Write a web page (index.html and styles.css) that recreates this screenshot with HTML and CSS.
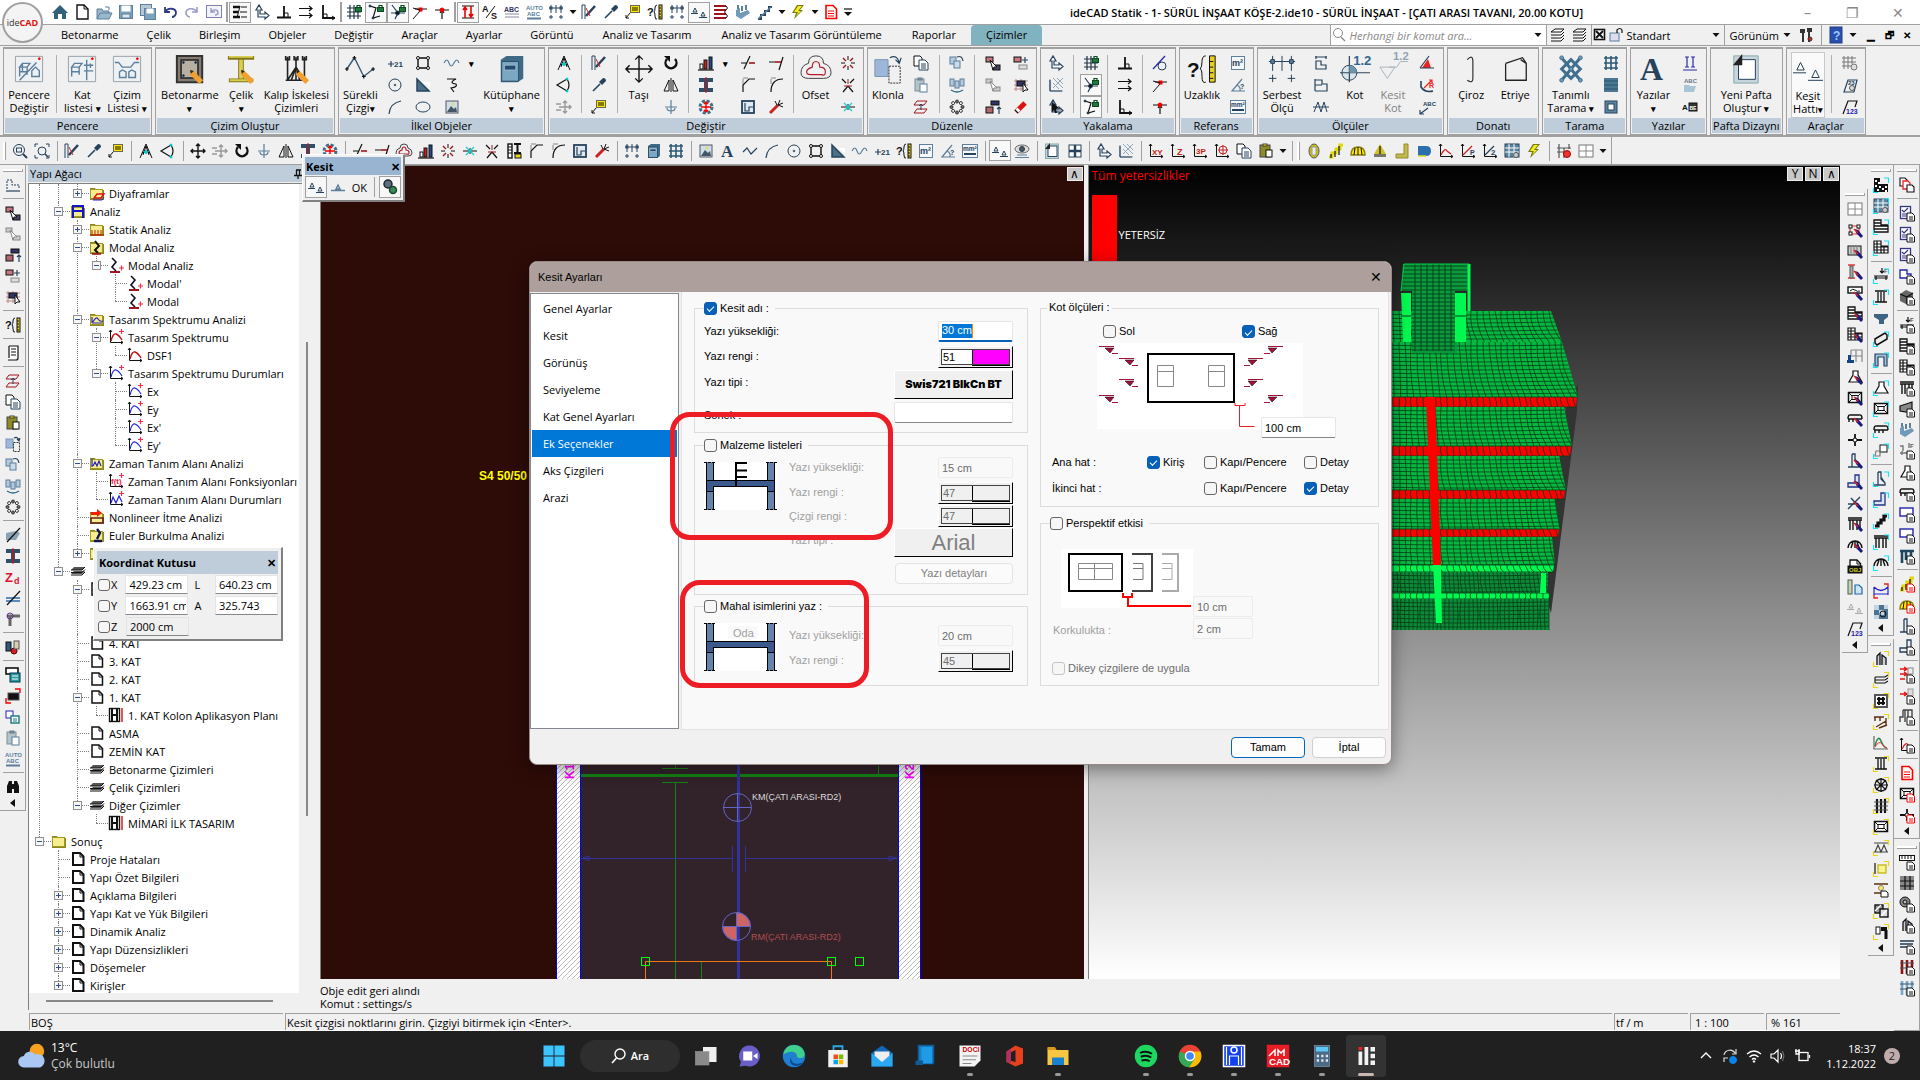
FILE: index.html
```html
<!DOCTYPE html>
<html lang="tr">
<head>
  <meta charset="UTF-8" />
  <meta name="viewport" content="width=device-width, initial-scale=1" />
  <title>ideCAD Statik</title>
  <link rel="stylesheet" href="styles.css">
</head>
<body>

<header class="titlebar">
  <div class="quick" data-icons="home new open save saveall undo redo redobox | layers* coord perp parallel corner | gridlock polylock* crosslock* redseg redmid | updown* as abc autoabc dim v pen pipette note measure dim section* rebar beam stairs v bolt v reddoc more"></div>
  <h1>ideCAD Statik - 1- SÜRÜL İNŞAAT KÖŞE-2.ide10 - SÜRÜL İNŞAAT - [ÇATI ARASI TAVANI, 20.00 KOTU]</h1>
  <div class="winbtns"><button>&#x2013;</button><button>&#x2750;</button><button>&#x2715;</button></div>
</header>

<nav class="menubar">
  <a href="#">Betonarme</a><a href="#">Çelik</a><a href="#">Birleşim</a><a href="#">Objeler</a><a href="#">Değiştir</a><a href="#">Araçlar</a><a href="#">Ayarlar</a><a href="#">Görüntü</a><a href="#">Analiz ve Tasarım</a><a href="#">Analiz ve Tasarım Görüntüleme</a><a href="#">Raporlar</a><a href="#" class="active">Çizimler</a>
  <div class="menu-right">
    <label class="search"><i data-i="lens"></i><input type="text" placeholder="Herhangi bir komut ara..." aria-label="Komut ara"><i data-i="v"></i></label>
    <div class="menu-icons" data-icons="stack stack"></div>
    <button class="layer"><i data-i="xbox"></i><i data-i="lock"></i><span>Standart</span><i data-i="v"></i></button>
    <button class="plain">Görünüm <i data-i="v"></i></button>
    <div class="menu-icons" data-icons="tools | help v"></div>
    <div class="mdi"><button>&#x2581;</button><button>&#x1F5D7;</button><button>&#x2715;</button></div>
  </div>
</nav>
<div class="logo"><span>ide<b>CAD</b></span></div>

<section class="ribbon">
  <div class="rgroup"><div class="rbody">
    <button class="big"><i data-i="winswap"></i><span>Pencere<br>Değiştir</span></button>
    <span class="rsep"></span>
    <button class="big"><i data-i="winlist"></i><span>Kat<br>listesi <b>▾</b></span></button>
    <button class="big"><i data-i="windraw"></i><span>Çizim<br>Listesi <b>▾</b></span></button>
  </div><h2>Pencere</h2></div>
  <div class="rgroup"><div class="rbody">
    <button class="big"><i data-i="column"></i><span>Betonarme<br><b>▾</b></span></button>
    <button class="big"><i data-i="steel"></i><span>Çelik<br><b>▾</b></span></button>
    <button class="big"><i data-i="scaffold"></i><span>Kalıp İskelesi<br>Çizimleri</span></button>
  </div><h2>Çizim Oluştur</h2></div>
  <div class="rgroup"><div class="rbody">
    <button class="big"><i data-i="polybig"></i><span>Sürekli<br>Çizgi<b>▾</b></span></button>
    <div class="rcol" data-icons="plus21 circle arc"></div>
    <div class="rcol" data-icons="rectd tri ellipse"></div>
    <div class="rcol" data-icons="wave spline image"></div>
    <div class="rcol arrows"><b>▾</b></div>
    <button class="big"><i data-i="book"></i><span>Kütüphane<br><b>▾</b></span></button>
  </div><h2>İlkel Objeler</h2></div>
  <div class="rgroup"><div class="rbody">
    <div class="rcol" data-icons="compass cone movegray"></div><span class="rsep"></span>
    <div class="rcol" data-icons="pen pipette note"></div><span class="rsep"></span>
    <button class="big"><i data-i="move"></i><span>Taşı</span></button>
    <div class="rcol" data-icons="rotate flip mirror"></div><span class="rsep"></span>
    <div class="rcol" data-icons="chart ibeam burst"></div>
    <div class="rcol arrows"><b>▾</b></div>
    <div class="rcol" data-icons="trim chamfer frame"></div>
    <div class="rcol" data-icons="extend fillet wand"></div><span class="rsep"></span>
    <button class="big"><i data-i="offset"></i><span>Ofset</span></button>
    <div class="rcol" data-icons="sparks redx crosscyan"></div>
  </div><h2>Değiştir</h2></div>
  <div class="rgroup"><div class="rbody">
    <button class="big"><i data-i="clone"></i><span>Klonla</span></button>
    <div class="rcol" data-icons="copy paste zlevel"></div><span class="rsep"></span>
    <div class="rcol" data-icons="clonemulti clonerow ring"></div><span class="rsep"></span>
    <div class="rcol" data-icons="sel1 sel2 sel3"></div>
    <div class="rcol" data-icons="sel4 sel5 eraser"></div>
  </div><h2>Düzenle</h2></div>
  <div class="rgroup"><div class="rbody">
    <div class="rcol" data-icons="coord hatchcoord coordsel"></div><span class="rsep"></span>
    <div class="rcol" data-icons="gridlock crosslock* polylock*"></div><span class="rsep"></span>
    <div class="rcol" data-icons="perp parallel corner"></div><span class="rsep"></span>
    <div class="rcol" data-icons="tangent redseg redmid"></div>
  </div><h2>Yakalama</h2></div>
  <div class="rgroup"><div class="rbody">
    <button class="big"><i data-i="measure"></i><span>Uzaklık</span></button>
    <div class="rcol" data-icons="m2 angle mm2"></div>
  </div><h2>Referans</h2></div>
  <div class="rgroup"><div class="rbody">
    <button class="big"><i data-i="dim"></i><span>Serbest<br>Ölçü</span></button>
    <div class="rcol" data-icons="dim1 dim2 dim3"></div>
    <button class="big"><i data-i="level"></i><span>Kot</span></button>
    <button class="big faded"><i data-i="levelcut"></i><span>Kesit<br>Kot</span></button>
    <div class="rcol" data-icons="redangle redradius abcarrow"></div>
  </div><h2>Ölçüler</h2></div>
  <div class="rgroup"><div class="rbody">
    <button class="big"><i data-i="hook"></i><span>Çiroz</span></button>
    <button class="big"><i data-i="stirrup"></i><span>Etriye</span></button>
  </div><h2>Donatı</h2></div>
  <div class="rgroup"><div class="rbody">
    <button class="big"><i data-i="lattice"></i><span>Tanımlı<br>Tarama <b>▾</b></span></button>
    <div class="rcol" data-icons="grid solid hole"></div>
  </div><h2>Tarama</h2></div>
  <div class="rgroup"><div class="rbody">
    <button class="big"><i data-i="letter"></i><span>Yazılar<br><b>▾</b></span></button>
    <div class="rcol" data-icons="textii abcopen abe"></div>
  </div><h2>Yazılar</h2></div>
  <div class="rgroup"><div class="rbody">
    <button class="big"><i data-i="sheet"></i><span>Yeni Pafta<br>Oluştur <b>▾</b></span></button>
  </div><h2>Pafta Dizaynı</h2></div>
  <div class="rgroup"><div class="rbody">
    <button class="big on"><i data-i="section"></i><span>Ke<u>s</u>it<br>Hattı<b>▾</b></span></button><span class="rsep"></span>
    <div class="rcol" data-icons="gridgear slope23 slope123"></div>
  </div><h2>Araçlar</h2></div>
</section>

<div class="toolbar" data-icons="h zoom zoomall | pen pipette note | compass cone | move movegray rotate mirror flip ibeam burst | trim extend offset chart sparks crosscyan redx sectioni chamfer fillet frame wand | dim book grid | image letter poly arc circle rectd tri wave plus21 measure m2 angle mm2 | section* eye | sheet four | coord hatchcoord | xy lz p3 lc copy pastey v | h ylw stairsy dome ycone yl dee curve curvep curve2 calcgrid bolt | gridred gridx v"></div>

<main class="shell">
  <div class="left">
    <div class="work">
      <div class="strip first" data-icons="= lshape | sel1 sel2 sel3 sel4 sel5 | measure | docs | zlevel copy pastey clone clonemulti clonerow ring | slab ibeam zd slope frameh | balls | calcs screen docblue paste autoabc | binoc <"></div>

      <aside class="tree-panel">
        <h2>Yapı Ağacı <i data-i="pin"></i></h2>
        <div class="tree-box">
          <ul class="tree">
            <li><ul>
              <li><ul>
                <li><p><em class="plus"></em><i data-i="fdiy"></i>Diyaframlar</p></li>
              </ul></li>
              <li><p><em></em><i data-i="fan"></i>Analiz</p><ul>
                <li><p><em class="plus"></em><i data-i="fst"></i>Statik Analiz</p></li>
                <li><p><em></em><i data-i="fmod"></i>Modal Analiz</p><ul>
                  <li><p><em></em><i data-i="modal"></i>Modal Analiz</p><ul>
                    <li><p><i data-i="modal"></i>Modal'</p></li>
                    <li><p><i data-i="modal"></i>Modal</p></li>
                  </ul></li>
                </ul></li>
                <li><p><em></em><i data-i="fspec"></i>Tasarım Spektrumu Analizi</p><ul>
                  <li><p><em></em><i data-i="specr+plus"></i>Tasarım Spektrumu</p><ul>
                    <li><p><i data-i="specr"></i>DSF1</p></li>
                  </ul></li>
                  <li><p><em></em><i data-i="specb+plus"></i>Tasarım Spektrumu Durumları</p><ul>
                    <li><p><i data-i="specb+plus"></i>Ex</p></li>
                    <li><p><i data-i="specb+plus"></i>Ey</p></li>
                    <li><p><i data-i="specb+plus"></i>Ex'</p></li>
                    <li><p><i data-i="specb+plus"></i>Ey'</p></li>
                  </ul></li>
                </ul></li>
                <li><p><em></em><i data-i="ftime"></i>Zaman Tanım Alanı Analizi</p><ul>
                  <li><p><i data-i="ft+plus"></i>Zaman Tanım Alanı Fonksiyonları</p></li>
                  <li><p><i data-i="timeb+plus"></i>Zaman Tanım Alanı Durumları</p></li>
                </ul></li>
                <li><p><i data-i="fnon"></i>Nonlineer İtme Analizi</p></li>
                <li><p><i data-i="feul"></i>Euler Burkulma Analizi</p></li>
                <li><p><em class="plus"></em><i data-i="folder"></i></p></li>
              </ul></li>
              <li><p><em></em><i data-i="stackb"></i></p><ul>
                <li><p><em></em><i data-i="page"></i></p><ul>
                  <li><p></p></li>
                  <li><p></p></li>
                </ul></li>
                <li><p><i data-i="page"></i>4. KAT</p></li>
                <li><p><i data-i="page"></i>3. KAT</p></li>
                <li><p><i data-i="page"></i>2. KAT</p></li>
                <li><p><em></em><i data-i="page"></i>1. KAT</p><ul>
                  <li><p><i data-i="plan"></i>1. KAT Kolon Aplikasyon Planı</p></li>
                </ul></li>
                <li><p><i data-i="page"></i>ASMA</p></li>
                <li><p><i data-i="page"></i>ZEMİN KAT</p></li>
                <li><p><i data-i="stackb"></i>Betonarme Çizimleri</p></li>
                <li><p><i data-i="stackb"></i>Çelik Çizimleri</p></li>
                <li><p><em></em><i data-i="stackb"></i>Diğer Çizimler</p><ul>
                  <li><p><i data-i="plan"></i>MİMARİ İLK TASARIM</p></li>
                </ul></li>
              </ul></li>
            </ul></li>
            <li><p><em></em><i data-i="folder"></i>Sonuç</p><ul>
              <li><p><i data-i="pageb"></i>Proje Hataları</p></li>
              <li><p><i data-i="pageb"></i>Yapı Özet Bilgileri</p></li>
              <li><p><em class="plus"></em><i data-i="pageb"></i>Açıklama Bilgileri</p></li>
              <li><p><em class="plus"></em><i data-i="pageb"></i>Yapı Kat ve Yük Bilgileri</p></li>
              <li><p><em class="plus"></em><i data-i="pageb"></i>Dinamik Analiz</p></li>
              <li><p><em class="plus"></em><i data-i="pageb"></i>Yapı Düzensizlikleri</p></li>
              <li><p><em class="plus"></em><i data-i="pageb"></i>Döşemeler</p></li>
              <li><p><em class="plus"></em><i data-i="pageb"></i>Kirişler</p></li>
            </ul></li>
          </ul>
          <div class="vbar"></div>
          <div class="hbar"></div>
        </div>
      </aside>

      <div class="center">
        <div class="views">
          <div class="view plan">
            <svg class="drawing" width="763" height="813" viewBox="321 165 763 813">
              <defs>
                <pattern id="dots" width="5" height="5" patternUnits="userSpaceOnUse"><rect width="5" height="5" fill="#fff"/><path d="M0 5L5 0" stroke="#bbb"/></pattern>
              </defs>
              <text x="479" y="479" fill="#ff0" font-size="12" font-weight="bold">S4 50/50</text>
              <rect x="581" y="600" width="317" height="378" fill="#32222a"/>
              <g fill="url(#dots)" stroke="#00f" stroke-width="1">
                <rect x="556.5" y="600" width="24" height="390"/><rect x="898.5" y="600" width="22" height="390"/>
              </g>
              <g fill="none" stroke="#148214">
                <path d="M581 774.500H898" stroke-width="3"/>
                <path d="M662 767.500H688M662 781.500H688M675.500 700V767M675.500 781V978M701.500 961V978M878.500 765V774"/>
              </g>
              <path d="M738.500 700V978" stroke="#32329a" stroke-width="3"/>
              <path d="M581 857.500H732M746 857.500H898M732.500 845V871M745.500 845V871M583 857l6-2v5zM896 857l-7-2v5z" stroke="#32329a" fill="none"/>
              <g fill="none" stroke="#6464c8">
                <circle cx="737.500" cy="806.500" r="14"/><path d="M723 806.500h28M737.500 792v28"/>
                <path d="M736.500 925.500v-14a14 14 0 0 1 14 14zM736.500 925.500v14a14 14 0 0 1-14-14z" fill="#cf6464"/>
                <circle cx="736.500" cy="925.500" r="14"/>
              </g>
              <path d="M645.500 978V960.500H831.500V978" fill="none" stroke="#f07810"/>
              <g fill="none" stroke="#0f0"><rect x="641.500" y="956.500" width="8" height="8"/><rect x="827.500" y="956.500" width="8" height="8"/><rect x="855.500" y="956.500" width="8" height="8"/></g>
              <text x="752" y="799" fill="#ddd" font-size="9">KM(ÇATI ARASI-RD2)</text>
              <text x="751" y="939" fill="#b05050" font-size="9">RM(ÇATI ARASI-RD2)</text>
              <g fill="#f0f" font-size="12" font-weight="bold"><text transform="translate(574 778) rotate(-90)">K1</text><text transform="translate(914 778) rotate(-90)">K2</text></g>
            </svg>
            <div class="vbtns"><button>&#x2227;</button></div>
          </div>
          <div class="view model">
            <p class="warn">Tüm yetersizlikler</p>
            <p class="legend"><span></span>YETERSİZ</p>
            <svg class="drawing" width="752" height="813" viewBox="1088 165 752 813" id="model"></svg>
            <div class="vbtns"><button>Y</button><button>N</button><button>&#x2227;</button></div>
          </div>
        </div>
        <div class="command">Obje edit geri alındı<br>Komut : settings/s</div>
      </div>
    </div>
    <footer class="status"><span>BOŞ</span><span>Kesit çizgisi noktlarını girin. Çizgiyi bitirmek için &lt;Enter&gt;.</span><span>tf / m</span><span>1 : 100</span><span>% 161</span></footer>
  </div>
  <div class="strips">
    <div class="scol low"><div class="strip" data-icons="= gridx nodes+brush slabg+brush colred+brush beamw+brush lshp+brush lgrid+brush foot bell+brush foundation+brush cap+brush star tower+brush boot+brush cross+brush piles+brush dome2+brush obj strips sectiong slope123 <"></div></div>
    <div class="scol">
      <div class="strip" data-icons="= checker+cyan calcgrid+cyan lshp+cyan lgrid+cyan | load+cyan ibig+cyan funnel slab2+cyan portal+cyan | bell+cyan foundation+cyan cap+cyan boxes+cyan | tower+cyan boot+cyan stairk+cyan piles+cyan dome2+cyan | bluecurve hatchz <"></div>
      <div class="strip" data-icons="= towers+yel layersw+yel mesh+yel truss+yel peak ibig+yel star8+yel bars+yel foundation+yel zig+yel boxy+yel noded hatchb+yel hammer+yel <"></div>
    </div>
    <div class="scol">
      <div class="strip" data-icons="= docsred | check+doc check+doc check+doc lshape2+doc block+doc | load+doc lshp+doc lgrid+doc piles+doc cone3+doc beam load2+doc bell+doc cap+doc monitor+doc monitor+doc pilesb+doc | stairsy+rdoc dome+rdoc towerb+doc bootb+doc | redarr+doc redarr2+doc rib+doc | curve+doc | reddoc foundation+rdoc star+rdoc <"></div>
      <div class="strip grow" data-icons="= ruler+doc mesh2 gear+doc towers+doc slab3+doc barsred+doc barsblue+doc"><button></button></div>
    </div>
  </div>
</main>

<footer class="taskbar">
  <div class="weather"><i data-i="weather"></i><p>13°C<br><span>Çok bulutlu</span></p></div>
  <div class="apps">
    <button><i data-i="win"></i></button>
    <button class="ara"><i data-i="lensw"></i>Ara</button>
    <button><i data-i="taskview"></i></button>
    <button><i data-i="chat"></i></button>
    <button><i data-i="edge"></i></button>
    <button><i data-i="store"></i></button>
    <button><i data-i="mail"></i></button>
    <button><i data-i="phone"></i></button>
    <button class="run"><i data-i="docapp"></i></button>
    <button><i data-i="office"></i></button>
    <button class="run"><i data-i="files"></i></button>
    <span class="slot"></span>
    <button class="run"><i data-i="spotify"></i></button>
    <button class="run"><i data-i="chrome"></i></button>
    <button class="run"><i data-i="bluei"></i></button>
    <button class="run"><i data-i="redcad"></i></button>
    <button class="run"><i data-i="calc"></i></button>
    <button class="run current"><i data-i="ideapp"></i></button>
  </div>
  <div class="tray"><i data-i="chev"></i><i data-i="sync"></i><i data-i="wifi"></i><i data-i="vol"></i><i data-i="bat"></i><p>18:37<br>1.12.2022</p><b>2</b></div>
</footer>

<!-- Kesit araç kutusu -->
<div class="float kesit">
  <h3>Kesit <button>&#x2715;</button></h3>
  <div><button class="on"><i data-i="section"></i></button><button><i data-i="section1"></i></button><button>OK</button><span></span><button class="on"><i data-i="gears"></i></button></div>
</div>

<!-- Koordinat kutusu -->
<div class="float koord">
  <h3>Koordinat Kutusu <button>&#x2715;</button></h3>
  <div class="krow"><label><input type="checkbox">X</label><input type="text" value="429.23 cm" aria-label="X"><span>L</span><input type="text" value="640.23 cm" aria-label="L"></div>
  <div class="krow"><label><input type="checkbox">Y</label><input type="text" value="1663.91 cm" aria-label="Y"><span>A</span><input type="text" value="325.743" aria-label="A"></div>
  <div class="krow"><label><input type="checkbox">Z</label><input type="text" value="2000 cm" aria-label="Z" class="grey"></div>
</div>

<!-- Kesit Ayarları penceresi -->
<div class="dialog" role="dialog" aria-label="Kesit Ayarları">
  <div class="dtitle">Kesit Ayarları <button>&#x2715;</button></div>
  <div class="dmain">
    <nav class="dlist"><a href="#">Genel Ayarlar</a><a href="#">Kesit</a><a href="#">Görünüş</a><a href="#">Seviyeleme</a><a href="#">Kat Genel Ayarları</a><a href="#" class="active">Ek Seçenekler</a><a href="#">Aks Çizgileri</a><a href="#">Arazi</a></nav>
    <div class="dpage">
      <div class="dcol">
        <fieldset class="g1">
          <legend><label><input type="checkbox" checked>Kesit adı :</label></legend>
          <div class="frow"><label for="h1">Yazı yüksekliği:</label><span class="focus"><mark>30 cm</mark><input type="text" id="h1" value=""></span></div>
          <div class="frow"><span>Yazı rengi :</span><button class="color">51<span class="magenta"></span></button></div>
          <div class="frow tall"><span>Yazı tipi :</span><button class="font swiss">Swis721 BlkCn BT</button></div>
          <div class="frow suffix"><label for="sonek">Sonek :</label><input type="text" id="sonek" class="wide"></div>
        </fieldset>
        <fieldset class="g2">
          <legend><label><input type="checkbox">Malzeme listeleri</label></legend>
          <div class="withpic">
            <svg width="74" height="50" viewBox="0 0 74 50"><rect width="74" height="48" fill="#fff"/><g id="hframe"><path d="M2 0h8v48H2zM63 0h8v48h-8z" fill="#6484ac"/><path d="M2 18h69v11h-8v-5H10v5H2z" fill="#3a5a8e"/><path d="M2.500 0v48M9.500 0v18M9.500 24v24M63.500 0v18M63.500 24v24M70.500 0v48M2 18.500h69M9 24.500h54M2 29.500h8M63 29.500h8" stroke="#000" fill="none"/><path d="M0 .5h12M62 .5h12M0 47.500h12M62 47.500h12" stroke="#000" stroke-dasharray="3 1"/></g><path d="M32 24V1h11M32 8.500h11M32 15h11" stroke="#000" stroke-width="2" fill="none"/></svg>
            <div class="rows">
              <div class="frow"><label for="h2">Yazı yüksekliği:</label><input type="text" id="h2" value="15 cm" disabled></div>
              <div class="frow"><span>Yazı rengi :</span><button class="color" disabled>47<span></span></button></div>
              <div class="frow short"><span>Çizgi rengi :</span><button class="color" disabled>47<span></span></button></div>
              <div class="frow tall"><span>Yazı tipi :</span><button class="font arial" disabled>Arial</button></div>
              <div class="frow tall end"><button class="soft" disabled>Yazı detayları</button></div>
            </div>
          </div>
        </fieldset>
        <fieldset class="g3">
          <legend><label><input type="checkbox">Mahal isimlerini yaz :</label></legend>
          <div class="withpic">
            <svg width="74" height="50" viewBox="0 0 74 50"><rect width="74" height="48" fill="#fff"/><use href="#hframe"/><rect x="24" y="3" width="30" height="13" fill="#f9f9f9"/><text x="29" y="14" font-size="11" fill="#a0a0a0">Oda</text></svg>
            <div class="rows">
              <div class="frow"><label for="h3">Yazı yüksekliği:</label><input type="text" id="h3" value="20 cm" disabled></div>
              <div class="frow"><span>Yazı rengi :</span><button class="color" disabled>45<span></span></button></div>
            </div>
          </div>
        </fieldset>
      </div>
      <div class="dcol">
        <fieldset class="g4">
          <legend>Kot ölçüleri :</legend>
          <div class="sides"><label><input type="checkbox">Sol</label><label><input type="checkbox" checked>Sağ</label></div>
          <div class="kotpic">
            <svg width="206" height="87" viewBox="0 0 206 87"><rect width="206" height="86" fill="#fff"/><rect x="51" y="11" width="86" height="48" fill="none" stroke="#000" stroke-width="2"/><path d="M60.500 22.500h16v21h-16zM60.500 28.500h16M111.500 22.500h16v21h-16zM111.500 28.500h16" fill="none" stroke="#888"/><g id="kots"><path d="M2 3.500h15M15 10.500h6M22 15.500h15M35 22.500h6M22 36.500h15M35 43.500h6M2 52.500h15M15 59.500h6" stroke="#a0143c"/><path d="M8 5h9l-4 5zM28 17h9l-4 5zM28 38h9l-4 5zM8 54h9l-4 5z" fill="#a0143c" stroke="#000" stroke-width=".5"/></g><use href="#kots" transform="translate(188 0) scale(-1 1)"/><path d="M138 60v2.500h10V60M142.500 62v21.500h15" fill="none" stroke="#ee1c24"/></svg>
            <input type="text" value="100 cm" aria-label="Mesafe">
          </div>
          <div class="hat"><span>Ana hat :</span><label><input type="checkbox" checked>Kiriş</label><label><input type="checkbox">Kapı/Pencere</label><label><input type="checkbox">Detay</label></div>
          <div class="hat"><span>İkinci hat :</span><span></span><label><input type="checkbox">Kapı/Pencere</label><label><input type="checkbox" checked>Detay</label></div>
        </fieldset>
        <fieldset class="g5">
          <legend><label><input type="checkbox">Perspektif etkisi</label></legend>
          <div class="persp">
            <svg width="132" height="59" viewBox="0 0 132 59"><rect width="132" height="59" fill="#fff"/><rect x="8" y="5" width="53" height="37" fill="none" stroke="#000" stroke-width="2"/><path d="M17.500 14.500h34v16h-34zM17.500 19.500h34M33.500 14v16" fill="none" stroke="#888"/><path d="M71 5h20v37H71" fill="none" stroke="#404040" stroke-width="2"/><path d="M72 14.500h10v16H72M72 19.500h10" fill="none" stroke="#777"/><path d="M101 5h16v37h-16" fill="none" stroke="#aaa" stroke-width="2"/><path d="M101 14.500h10v16h-10M101 19.500h10" fill="none" stroke="#aaa"/><path d="M62 44v4h9v-4M67 48v9h63" fill="none" stroke="#f00" stroke-width="2"/></svg>
            <div><input type="text" value="10 cm" aria-label="Perspektif" disabled><input type="text" id="kork" value="2 cm" disabled></div>
            <label for="kork">Korkulukta :</label>
          </div>
          <label class="off"><input type="checkbox" disabled>Dikey çizgilere de uygula</label>
        </fieldset>
      </div>
    </div>
  </div>
  <div class="dfoot"><button class="primary">Tamam</button><button>İptal</button></div>
</div>
<div class="redbox one"></div>
<div class="redbox two"></div>

<script src="script.js"></script>
</body>
</html>
```
FILE: styles.css
```css
* { box-sizing: border-box; }
body {
  margin: 0;
  height: 100vh;
  display: flex;
  flex-direction: column;
  overflow: hidden;
  background: #f0f0f0;
  color: #000;
  font-family: 'Open Sans', 'Liberation Sans', sans-serif;
  font-size: 11px;
  line-height: 13px;
}
button, input { font: inherit; color: inherit; }
button { border: 0; padding: 0; background: none; }
a { color: inherit; text-decoration: none; }
p, h1, h2, h3, ul { margin: 0; padding: 0; font-size: 11px; font-weight: normal; }
i { display: inline-flex; font-style: normal; }
svg { display: block; }
i svg, .tb svg { width: 16px; height: 16px; overflow: visible; flex: none; }

/* üst çubuk */
.titlebar {
  height: 25px;
  display: flex;
  align-items: center;
  background: #fff;
  border-bottom: 1px solid #a0a0a0;
  padding-left: 49px;
}
.titlebar h1 {
  flex: 1;
  text-align: center;
  font-size: 11px;
  font-weight: 600;
  padding-left: 15px;
  white-space: nowrap;
}
.quick, .toolbar, .menu-icons { display: flex; align-items: center; }
.tb {
  width: 22px;
  height: 21px;
  flex: none;
  display: flex;
  align-items: center;
  justify-content: center;
}
.tb.on { background: #f8f8f8; border: 1px solid #a0a0a0; }
.tb.slim { width: 11px; }
.sep { width: 1px; height: 20px; margin: 0 3px 0 4px; background: #a0a0a0; flex: none; }
.quick .sep { width: 2px; margin: 0 1px; }
.handle { width: 3px; height: 18px; margin: 0 3px 0 1px; border-right: 1px solid #a0a0a0; background: #fff; flex: none; }
.winbtns { display: flex; }
.winbtns button { width: 45px; color: #888; font-size: 14px; }
.logo {
  position: absolute;
  left: 2px;
  top: 2px;
  width: 41px;
  height: 41px;
  border: 2px solid #a0a0a0;
  border-radius: 50%;
  background: #f4f4f4;
  display: flex;
  align-items: center;
  justify-content: center;
  font-size: 9px;
  color: #333;
}
.logo b { color: #e01010; }

.menubar {
  height: 21px;
  display: flex;
  align-items: center;
  padding-left: 47px;
  border-bottom: 1px solid #a0a0a0;
}
.menubar a { padding: 3px 14px 4px; white-space: nowrap; }
.menubar a:nth-child(n+9) { padding: 3px 15px 4px; }
.menubar a.active { background: #80b2c0; border-radius: 4px 4px 0 0; }
.menu-right { margin-left: auto; display: flex; align-items: center; height: 20px; }
.search {
  width: 217px;
  height: 20px;
  display: flex;
  align-items: center;
  background: #fff;
  border: 1px solid #a0a0a0;
  border-width: 0 1px;
}
.search input { flex: 1; width: 100px; border: 0; background: none; font-style: italic; outline: none; }
.search input::placeholder { color: #888; }
.layer {
  width: 134px;
  height: 20px;
  display: flex;
  align-items: center;
  border: 1px solid #a0a0a0;
  border-width: 0 1px;
}
.layer span { flex: 1; text-align: left; padding-left: 2px; }
.plain { display: flex; align-items: center; padding-left: 4px; }
.mdi { display: flex; padding: 0 4px; }
.mdi button { width: 18px; font-weight: bold; font-size: 10px; }

/* şerit */
.ribbon {
  height: 91px;
  padding: 1px 54px 3px 3px;
  display: grid;
  grid-template-columns: 149fr 179fr 207fr 315fr 170fr 135fr 75fr 187fr 92fr 85fr 76fr 73fr 80fr;
  gap: 3px;
  border-bottom: 2px solid #a0a0a0;
}
.rgroup {
  min-width: 0;
  border: 1px solid #a0a0a0;
  border-width: 2px 1px 1px;
  padding: 0 1px 1px;
  display: flex;
  flex-direction: column;
}
.rgroup h2 { height: 15px; line-height: 15px; text-align: center; background: #bfcddb; white-space: nowrap; }
.rbody { flex: 1; display: flex; justify-content: space-around; padding-top: 3px; min-width: 0; }
.big {
  display: flex;
  flex-direction: column;
  align-items: center;
  justify-content: flex-start;
  white-space: nowrap;
}
.big > i { height: 33px; align-items: center; }
.big > i svg { width: 30px; height: 30px; }
.big svg * { vector-effect: non-scaling-stroke; }
.big span { line-height: 13px; margin-top: 3px; }
.big b, .arrows b { font-size: 9px; }
.big.faded { color: #808080; }
.big.on { background: #fafafa; border: 1px solid #c8c8c8; height: 66px; padding: 0 1px; }
.rsep { width: 1px; height: 58px; margin-top: 3px; background: #b0b0b0; }
.rcol { width: 22px; display: flex; flex-direction: column; }
.rcol .tb { height: 22px; }
.rcol.arrows { width: 8px; padding-top: 5px; }

.toolbar {
  height: 27px;
  width: 1612px;
  max-width: 100%;
  padding-left: 2px;
  border-right: 1px solid #a0a0a0;
}

/* çalışma alanı */
.shell { flex: 1; display: flex; min-height: 0; border-top: 1px solid #a0a0a0; }
.left { flex: 1; min-width: 0; display: flex; flex-direction: column; }
.work { flex: 1; display: flex; min-height: 0; }
.strip {
  width: 26px;
  padding: 1px 0 2px 1px;
  border: 1px solid #a0a0a0;
  border-width: 0 1px 1px 0;
  display: flex;
  flex-direction: column;
  align-items: center;
}
.strip.first { align-self: flex-start; }
.strip .tb { height: 21px; }
.strip .tb.slim { height: 11px; }
.strip .sep { width: 21px; height: 1px; margin: 3px 0; }
.strip .handle { width: 20px; height: 3px; margin: 3px 0 2px; border: 1px solid #a0a0a0; border-width: 0 1px 1px 0; }
.strips { width: 80px; display: flex; padding-left: 2px; }
.strips .scol { display: flex; flex-direction: column; gap: 3px; }
.strips .low { padding-top: 24px; }
.strips .grow { flex: 1; }

.tree-panel { width: 290px; display: flex; flex-direction: column; padding: 0 0 3px 2px; }
.tree-panel h2 {
  height: 17px;
  line-height: 16px;
  padding: 0 10px 0 2px;
  background: #bfcddb;
  display: flex;
  justify-content: space-between;
  align-items: center;
}
.tree-box {
  flex: 1;
  min-height: 0;
  margin-top: 1px;
  display: grid;
  grid-template: 1fr 17px / 1fr 17px;
  border: 1px solid #808080;
  border-width: 1px 0 0 1px;
}
.tree { background: #fff; overflow: hidden; font-size: 11px; list-style: none; padding: 0 0 0 1px; }
.tree ul { list-style: none; padding-left: 19px; }
.tree li { position: relative; white-space: nowrap; }
.tree p { height: 18px; display: flex; align-items: center; padding-left: 21px; position: relative; }
.tree p i { width: 20px; }
/* noktalı kılavuz çizgileri */
.tree li::before {
  content: '';
  position: absolute;
  left: 9px;
  top: 0;
  bottom: 0;
  border-left: 1px dotted #808080;
}
.tree li:last-child::before { bottom: auto; height: 9px; }
.tree p::before {
  content: '';
  position: absolute;
  left: 9px;
  top: 9px;
  width: 12px;
  border-top: 1px dotted #808080;
}
.tree p:empty::before { display: none; }
.tree em {
  position: absolute;
  left: 5px;
  top: 5px;
  width: 9px;
  height: 9px;
  border: 1px solid #909090;
  background: linear-gradient(#33508c, #33508c) center / 5px 1px no-repeat, #f6f6f6;
}
.tree em.plus {
  background: linear-gradient(#33508c, #33508c) center / 5px 1px no-repeat, linear-gradient(#33508c, #33508c) center / 1px 5px no-repeat, #f6f6f6;
}
.vbar::before { content: ''; display: block; width: 2px; height: 474px; margin: 158px 0 0 7px; background: #888; }
.hbar::before { content: ''; display: block; width: 227px; height: 2px; margin: 7px 0 0 17px; background: #888; }

.center { flex: 1; min-width: 0; display: flex; flex-direction: column; padding-left: 4px; }
.views { flex: 1; min-height: 0; display: flex; gap: 4px; }
.view { position: relative; overflow: hidden; flex: 763; border: 1px solid #808080; border-width: 1px 0 0 1px; }
.view .drawing { position: absolute; left: 0; top: 0; font-family: 'Liberation Sans', sans-serif; }
.plan { background: #2d0b07; }
.model { flex: 752; background: linear-gradient(#000, #fff); color: #fff; }
.model p { position: relative; padding-left: 3px; font-size: 11px; }
.model .warn { color: #f00; padding-top: 3px; font-size: 12px; }
.model .legend { display: flex; align-items: center; gap: 2px; padding-top: 13px; }
.legend span { width: 25px; height: 79px; background: #f00; }
.vbtns { position: absolute; right: 1px; top: 1px; display: flex; gap: 2px; color: #000; }
.vbtns button { width: 16px; height: 14px; background: #c8c8c8; border: 1px solid #eee; font-size: 12px; line-height: 12px; }
.command { height: 34px; padding-top: 5px; white-space: nowrap; }

.status { height: 18px; margin-left: 29px; display: flex; gap: 2px; border-bottom: 1px solid #fff; }
.status span { border: 1px solid #a0a0a0; border-width: 1px 0 0 1px; padding: 2px 1px; width: 74px; white-space: nowrap; }
.status span:nth-child(1) { width: 254px; }
.status span:nth-child(2) { flex: 1; }
.status span:nth-child(n+4) { padding-left: 4px; }

/* yüzen kutular */
.float { position: absolute; background: #f0f0f0; border: 1px solid #fff; border-right: 2px solid #808080; border-bottom: 2px solid #808080; }
.float h3 { display: flex; justify-content: space-between; align-items: center; font-weight: bold; padding: 0 3px; }
.float h3 button { font-size: 11px; }
.kesit { left: 302px; top: 154px; width: 103px; height: 48px; padding: 2px; }
.kesit h3 { height: 18px; background: #99b4d1; padding: 0 1px; }
.kesit div { display: flex; align-items: center; height: 24px; }
.kesit div button { width: 22px; height: 22px; display: flex; align-items: center; justify-content: center; }
.kesit div button.on { background: #f8f8f8; border: 1px solid #a0a0a0; }
.kesit div span { width: 1px; height: 20px; background: #a0a0a0; margin: 0 4px; }
.koord { left: 93px; top: 547px; width: 190px; height: 94px; padding: 3px; }
.koord h3 { height: 23px; background: #bfcddb; padding: 0 2px; }
.krow { display: flex; align-items: center; height: 21px; padding-left: 1px; }
.krow label { width: 28px; display: flex; align-items: center; }
.krow span { width: 27px; padding-left: 6px; }
.krow input[type=text] { width: 63px; height: 19px; border: 1px solid #e4e4e4; border-bottom-color: #868686; padding: 0 1px 0 3px; background: #fff; }
.krow input.grey { background: #f0f0f0; }

input[type=checkbox] {
  appearance: none;
  width: 13px;
  height: 13px;
  margin: 0 3px 0 0;
  border: 1px solid #666;
  border-radius: 3px;
  background: #f6f6f6;
  flex: none;
}
input[type=checkbox]:checked {
  border-color: #0560b8;
  background: #0560b8;
  display: grid;
  place-items: center;
}
input[type=checkbox]:checked::before {
  content: '';
  width: 6px;
  height: 3px;
  border: 1px solid #fff;
  border-width: 0 0 1px 1px;
  transform: rotate(-45deg);
}
input[type=checkbox]:disabled { border-color: #c4c4c4; }
.krow input[type=checkbox] { width: 12px; height: 12px; margin-right: 1px; }

/* Kesit Ayarları */
.dialog {
  position: absolute;
  left: 529px;
  top: 261px;
  width: 863px;
  height: 504px;
  display: flex;
  flex-direction: column;
  background: #f0f0f0;
  border: 1px solid #978a86;
  border-radius: 8px;
  overflow: hidden;
  box-shadow: 0 4px 18px rgba(0, 0, 0, 0.4);
  font-family: 'Liberation Sans', sans-serif;
}
.dtitle {
  height: 30px;
  display: flex;
  align-items: center;
  justify-content: space-between;
  padding: 0 9px 0 8px;
  background: #ada09c;
}
.dtitle button { font-size: 14px; }
.dmain { flex: 1; display: flex; min-height: 0; }
.dlist { width: 149px; margin: 1px 0; padding: 1px; background: #fff; border: 1px solid #828790; }
.dlist a { display: block; height: 27px; line-height: 27px; padding-left: 11px; font-family: 'Open Sans', sans-serif; }
.dlist a.active { background: #0078d7; color: #fff; }
.dpage {
  flex: 1;
  margin: 0 2px;
  padding: 9px 9px 0 12px;
  background: #f9f9f9;
  border: 1px solid #e2e2e2;
  border-top: 0;
  display: grid;
  grid-template-columns: 334px 1fr;
  column-gap: 12px;
}
.dcol { display: flex; flex-direction: column; }
fieldset { margin: 0; padding: 0 14px 0 9px; border: 1px solid #dcdcdc; min-width: 0; }
legend { height: 14px; padding: 0 6px 0 0; }
legend label { display: flex; align-items: center; height: 14px; }
.g1 { height: 132px; padding-top: 4px; }
.g2 { height: 157px; margin-top: 5px; }
.g3 { height: 87px; margin-top: 4px; }
.g4 { height: 206px; }
.g4 legend { padding: 0 2px; margin-left: -3px; }
.g5 { height: 170px; margin-top: 9px; }
.frow { height: 25px; display: flex; align-items: center; justify-content: space-between; }
.frow.tall { height: 31px; }
.frow.short { height: 22px; }
.frow.tall > span:first-child { padding-bottom: 4px; }
.frow.suffix label { padding-top: 5px; }
.frow.end { justify-content: flex-end; }
.frow input[type=text], .kotpic input, .focus {
  width: 75px;
  height: 21px;
  background: #fff;
  border: 1px solid #e6e6e6;
  border-bottom-color: #868686;
  border-radius: 2px;
  padding: 0 3px;
}
.frow input.wide { width: 119px; }
.frow .focus { display: flex; align-items: center; border-bottom: 2px solid #0560b8; }
.focus mark { background: #0078d7; color: #fff; height: 14px; border-right: 1px solid #f80; }
.frow .focus input { flex: 1; width: 10px; border: 0; padding: 0; height: 14px; }
input[type=text]:disabled { background: #f9f9f9 !important; border-color: #ececec !important; color: #6d6d6d; }
.color {
  width: 75px;
  height: 22px;
  padding: 2px 2px 2px 4px;
  border: 1px solid #fff;
  border-right-color: #000;
  border-bottom-color: #000;
  display: grid;
  grid-template-columns: 1fr 38px;
  text-align: left;
  line-height: 16px;
  background: linear-gradient(#fff, #fff) 2px 2px / 31px 16px no-repeat, #f0f0f0;
  outline: 1px solid #444;
  outline-offset: -4px;
}
.color span { height: 17px; border: 1px solid #000; background: #f0f0f0; }
.color span.magenta { background: #f0f; }
.color:disabled { background: #f0f0f0; color: #6d6d6d; }
.font {
  width: 119px;
  height: 29px;
  background: #f0f0f0;
  border: 1px solid #fff;
  border-right-color: #000;
  border-bottom-color: #000;
}
.swiss { font-weight: 900; font-size: 11px; font-family: Inter, 'DejaVu Sans', sans-serif; }
.arial { font-size: 22px; color: #808080; }
.soft { width: 118px; height: 21px; border: 1px solid #e4e4e4; border-radius: 4px; background: #fbfbfb; color: #808080; }
.withpic { display: flex; gap: 11px; padding-top: 3px; }
.withpic svg { margin-top: 7px; flex: none; }
.rows { flex: 1; color: #a0a0a0; }
.g3 .withpic { padding-top: 10px; }
.g3 .withpic svg { margin-top: 0; }
.sides { display: flex; margin: 10px 0 0 53px; gap: 107px; }
.sides label, .hat label, .off { display: flex; align-items: center; height: 13px; }
.kotpic { position: relative; margin: 5px 0 0 47px; height: 97px; }
.kotpic input { position: absolute; left: 164px; top: 74px; }
.hat { display: grid; grid-template-columns: 95px 57px 100px 1fr; height: 26px; align-items: center; padding-left: 2px; }
.kotpic + .hat { margin-top: 9px; }
.persp { position: relative; display: grid; grid-template-columns: 132px 60px; margin: 19px 0 0 11px; height: 92px; align-content: start; }
.persp div { padding-top: 47px; }
.persp input { width: 60px; height: 21px; border: 1px solid #ececec; border-radius: 2px; padding: 0 3px; margin-bottom: 1px; display: block; }
.persp label { position: absolute; left: -8px; top: 75px; color: #a0a0a0; }
.off { color: #6d6d6d; margin: 21px 0 0 2px; }
.dfoot { height: 34px; display: flex; justify-content: flex-end; align-items: center; gap: 7px; padding-right: 5px; }
.dfoot button { width: 74px; height: 21px; border: 1px solid #d0d0d0; border-radius: 4px; background: #fdfdfd; }
.dfoot button.primary { border-color: #0067c0; }

.redbox { position: absolute; border: 5px solid #ee1c24; border-radius: 20px; pointer-events: none; }
.redbox.one { left: 670px; top: 412px; width: 223px; height: 128px; }
.redbox.two { left: 680px; top: 580px; width: 189px; height: 108px; }

/* görev çubuğu */
.taskbar {
  height: 49px;
  background: #202020;
  color: #fff;
  display: grid;
  grid-template-columns: 1fr auto 1fr;
  align-items: center;
}
.weather { display: flex; align-items: center; gap: 6px; padding-left: 19px; line-height: 16px; }
.weather svg { width: 26px; height: 26px; }
.weather p { font-size: 12px; }
.weather p span { color: #c8c8c8; }
.apps { display: flex; align-items: center; }
.apps button, .slot { width: 44px; height: 42px; display: flex; align-items: center; justify-content: center; position: relative; }
.apps i svg { width: 24px; height: 24px; }
.apps .ara { width: 100px; height: 32px; margin: 0 4px; border-radius: 16px; background: #2e2e2e; font-weight: 600; gap: 4px; }
.apps .ara svg { width: 16px; height: 16px; }
.apps .run::after {
  content: '';
  position: absolute;
  bottom: 1px;
  width: 6px;
  height: 3px;
  border-radius: 2px;
  background: #9a9a9a;
}
.apps .current { width: 40px; margin: 0 2px; background: #333; border-radius: 4px; }
.apps .current::after { width: 16px; background: #c9b6b2; }
.tray { display: flex; justify-content: flex-end; align-items: center; gap: 8px; padding-right: 20px; }
.tray p { text-align: right; line-height: 15px; margin-left: 8px; }
.tray b { width: 16px; height: 16px; border-radius: 50%; background: #c0acac; color: #222; text-align: center; line-height: 16px; font-weight: normal; }
```
FILE: script.js
```js
const N = '#26425c', B = '#5b7f9c', K = '#111', R = '#a01420';
const p = (d, c = N, w = 1.2, f = 'none') => `<path d="${d}" stroke="${c}" stroke-width="${w}" fill="${f}"/>`;
const f = (d, c = N) => `<path d="${d}" fill="${c}"/>`;
const t = (s, x, y, z, c = N, e = '') => `<text x="${x}" y="${y}" font-size="${z}" fill="${c}" font-family="Liberation Sans" font-weight="bold" ${e}>${s}</text>`;
const r = (x, y, w, h, fill, c = N, sw = 1) => `<rect x="${x}" y="${y}" width="${w}" height="${h}" fill="${fill}" stroke="${c}" stroke-width="${sw}"/>`;
const o = (x, y, q, fill = 'none', c = N, w = 1) => `<circle cx="${x}" cy="${y}" r="${q}" fill="${fill}" stroke="${c}" stroke-width="${w}"/>`;

const lock = r(9.5, 3.5, 6, 4, '#1d7a3c', '#0b4a20') + p('M11 3V1.500h3V3', '#0b4a20');
const axes = p('M2.500 1V13.500H15M1 3l1.500-2L4 3M13 12l2 1.500L13 15', K, 1);
const folder = f('M1 3h5l1 2h8v10H1z', '#8a8620') + r(1.5, 4.5, 12, 9, '#f7ec8e', '#a09a20');
const sheetBox = r(1.5, 2.5, 29, 27, '#eef1f3', '#9aa3aa') + o(27, 5, 1, '#f00', '#f00');
const pencil = f('M16 17l4 1 10 10-4 4-10-10z', '#f0a030') + f('M16 17l4 1-3 3z', '#222');
const page = (w = 1.5, c = K) => p('M3 2h7l3.500 3.500V14H3z', c, w, '#fff') + p('M10 2v4h4', c, 1);

const icons = {
  v: f('M4.500 6h7L8 10z', K), '<': f('M10 4v8L5 8z', K), more: f('M4 8h8l-4 4z', K) + p('M4 5h8', K),
  home: f('M8 1L0 9h2v6h4v-5h4v5h4V9h2z', '#336079'), new: p('M3 1h7l4 4v10H3z', K, 1.4, '#fff') + p('M10 1v4h4', K, 1),
  open: f('M1 5h5l1 2h6v2h3l-3 6H1z', '#9cb8cc') + p('M1 15V5h5l1 2h6v2M1 15l3-6h12l-3 6zM9 3h4v3', B, 1),
  save: r(1.5, 1.500, 13, 13, '#7da2bb', B) + r(4, 2, 8, 5, '#fff', '#fff') + r(4, 10, 8, 4, '#dfe8ee', B),
  saveall: r(.5, .500, 11, 11, '#b4c8d6', B) + r(4.500, 4.500, 11, 11, '#7da2bb', B) + r(7, 5, 6, 4, '#fff', '#fff'),
  undo: p('M3 3v5h5M3 8c3-5 11-4 11 1 0 2-2 4-4 4', '#2c3c84', 1.8), redo: p('M13 3v5H8M13 8C10 3 2 4 2 9c0 2 2 4 4 4', '#9a9cc8', 1.6),
  redobox: r(.5, 1.500, 15, 12, '#f4f4fa', '#7c80b0') + p('M5 4v4h4M5 8c2-3 7-3 7 1 0 1-1 2-3 2', '#9a9cc8', 1.4),
  layers: p('M1 3h7M1 8h5M1 13h7', K, 2.6) + p('M9 3h6M8 8h7M9 13h6M8 2L5 14', K, 1),
  coord: p('M4 13V6H2l3-5 3 5H6v4h5V8l4 3.500L11 15v-2z', N, 1.2, '#fff'), coordsel: p('M4 13V6H2l3-5 3 5H6v4h5V8l4 3.500L11 15v-2z', N, 1.2, '#aab') + f('M4 3l7 6-3 1 1 4-2 0-1-3-2 2z', K),
  perp: p('M1 13.500h14M8 13V2', K, 1.8) + p('M8 9h4v4', K, 1), parallel: p('M1 4.500h13M11 2l3 2.500L11 7M1 11.500h13M11 9l3 2.500-3 2.500', K, 1.2), corner: p('M3 1v13h12', K, 1.8) + p('M3 10h4v4M12 12l3 2-3 2', K, 1),
  gridlock: p('M4 1v14M8 1v14M12 6v9M1 4h8M1 8h14M1 12h14', '#234', 1.2) + lock, polylock: p('M2 2L8 4 5 14 12 12', K, 1.2) + lock + o(2, 2, 1, K) + o(5, 14, 1, K), crosslock: p('M2 1L8 9M1 9h14M8 9l-3 6M8 9l6-5', N, 1.2) + o(7.500, 9, 2, K) + lock,
  redseg: p('M1 15L8 7M3 5h12', K, 1) + r(7, 4, 3, 3, '#e00', '#e00') + p('M1 4l7 2', K, 1), redmid: p('M1 6h14M8 6v9M6 9l2-3 2 3', K, 1.2) + o(8, 6, 2, '#e00', '#e00'),
  updown: p('M2 2h12M2 14h12', K, 1) + p('M5 14V4M3 6l2-3 2 3M11 2v10M9 10l2 3 2-3', '#e00', 1.6),
  as: t('A', 0, 8, 9, K) + p('M4 14L13 2', K, 1) + t('S', 9, 15, 9, K), abc: t('ABC', 0, 8, 7, '#336') + p('M1 10h14M1 13h14', '#88a', 1), autoabc: t('AUTO', 0, 6, 6, B) + t('ABC', 1, 12, 6, B) + p('M1 14.500h14', B, 2),
  dim: p('M1 4h14M3 1v8M8 1v8M13 1v8M3 11v4M1 13h4M13 11v4M11 13h4', N, 1) + r(2, 3, 2, 2, B) + r(12, 3, 2, 2, B), dim1: p('M2 2h12M3 1v3M13 1v3M3 6v8h10v-4H8V6z', N), dim2: p('M2 2v12M2 3h7v4h5v7H2M2 8h7', N), dim3: p('M1 13L5 3l3 10 3-10 3 10M0 8h16', N, 1),
  pen: p('M1 1v14M1 1h3v14', N, 1) + p('M5 12L14 2', N, 2.5) + p('M5 4l4 8', '#c22', 1), pipette: p('M2 14L9 7', N, 1.6) + f('M8 5l4-4q3 0 3 3l-4 4z', N), note: r(5.500, 1.500, 9, 7, '#ffe600', '#665') + p('M7 4h6M7 6h6M5 9l-4 5M1 11v3h3', K, 1),
  measure: t('?', 0, 12, 11, K) + p('M10 1Q8 1 8 4t-1 4q1 0 1 4t2 3', K, 1) + r(12, 1, 3, 14, '#e8d020', K) + p('M12 4h2M12 7h2M12 10h2M12 13h2', K, 1),
  section: p('M0 9.500h7M8 13.500h8M2 8l2-4 2 4zM10 12l2-4 2 4z', N, 1), sectiong: p('M0 9.500h7M8 13.500h8M2 8l2-4 2 4zM10 12l2-4 2 4z', '#aaa', 1), section1: p('M1 11.500h14M6 10l2-4 2 4z', B, 1.4),
  rebar: p('M1 2h12M1 6h12M1 10h12M1 14h12', R, 1.8) + p('M13 2q3 2 0 4t0 4t0 4', K, 1), beam: f('M1 6l4-2v5l8-3 2 3-9 6-5-3z', '#6f9ab8') + p('M3 5V1M7 7V2M11 6V1', B, 2), stairs: p('M1 15h3v-4h4V7h4V3h3', N, 2) + p('M1 15L14 3', B, 1.6), stairsy: p('M1 14h3v-4h4V6h4V2h3', '#e0d800', 3) + p('M3 15v-4M7 14V8M11 12V3', K, 1.2),
  bolt: f('M7 1h7l-4 5h3L4 15l2-6H2z', '#777a10') + f('M8 2h4L8 7h3l-5 5 2-4H4z', '#f4ee20'), reddoc: p('M3 1.500h7l3.500 3.500v9.500H3z', '#f00', 1.6, '#fff') + p('M5 7h6M5 9.500h6M5 12h6', '#f00', 1),
  lens: o(7, 6, 4.500, 'none', '#888') + p('M10 10l4 4', '#888'), lensw: o(9, 6, 5, 'none', '#fff', 1.4) + p('M5.500 10L1 15', '#fff', 1.6), stack: p('M1 5l4-3h9l-3 3zM1 8h10l3-3M1 11h10l3-3M1 14h10l3-3', K, 1, '#fff'), xbox: r(2.500, 2.500, 10, 10, '#fff', K, 1.6) + p('M4 4l7 7M11 4l-7 7', K, 2), lock: r(2, 6, 9, 8, '#dde', B) + p('M9 6V3q3-3 5 0v3', K),
  tools: f('M2 2h5v4H2zM4 6h2v9H4zM9 1h5v4h-2v10h-2V5H9z', '#333') + o(12, 12, 2, '#c22', '#333'), help: r(2, 0, 12, 16, '#2a4fae', '#203c80') + t('?', 5, 13, 12, '#9cf'),
  zoom: o(7, 7, 5.500) + r(4.500, 5, 5, 4, 'none') + p('M11 11l4 4', N, 2), zoomall: p('M1 4V1h3M12 1h3v3M15 12v3h-3M4 15H1v-3', N, 1) + o(8, 8, 4) + p('M11 11l3 3', N, 1.6), compass: p('M8 1L2 15M8 1l6 14M4 10q4-3 8 0M8 3l-3 9M8 3l3 9', K, 1) + o(8, 9, 1.500, '#0cc', '#0cc'), cone: p('M1 8L11 2q4 6 0 12z', K, 1.2) + o(11, 2, 1, '#0cc', '#0cc') + o(11, 14, 1, '#0cc', '#0cc'),
  move: p('M8 1v14M1 8h14M6 3l2-2 2 2M6 13l2 2 2-2M3 6L1 8l2 2M13 6l2 2-2 2', K, 1.4), movegray: p('M9 2v12M3 8h12M7 4l2-2 2 2M7 12l2 2 2-2M13 6l2 2-2 2M0 5h5M0 11h5', '#999', 1.4), rotate: p('M4 4a5.500 5.500 0 1 0 8 0', K, 2.4) + f('M1 1h6v6z', K), mirror: p('M8 1v14M2 8h12M4 9a4 3 0 0 0 8 0', B, 1.2), flip: p('M6 3v11H1zM10 3v11h5zM8 1v14', K, 1),
  ibeam: f('M1 1h14v4h-5v6h5v4H1v-4h5V5H1z', '#2d5068') + p('M8 0v16', '#e00', 1), burst: '<circle cx="8" cy="8" r="6" fill="none" stroke="#3f7088" stroke-width="3" stroke-dasharray="3 1.7"/>' + p('M8 3v10M3 8h10M6 5l2-2 2 2M6 11l2 2 2-2', '#e00', 1.4), trim: p('M1 8h6M4 14L10 1', K, 1.2) + p('M9 8h6', R, 1.6, 'none'), extend: p('M1 7h6M11 15L15 2', K, 1.2) + p('M7 7h6', R, 1.6), offset: p('M8 1q4 0 4 4 4 1 4 5 0 3-4 3H4q-4 0-4-3 0-4 4-5 0-4 4-4z', '#444', 1) + p('M8 4q2 0 2 3 3 0 3 2.500T11 11H5q-2 0-2-1.500T6 7q0-3 2-3z', '#b02030', 1.2), chart: r(2, 9, 3, 5, '#fff', K) + r(6, 5, 3, 9, '#c22', K) + r(11, 2, 3, 12, '#234a90', K) + p('M0 15h16', K),
  sparks: p('M8 1v4M8 11v4M1 8h4M11 8h4', K, 1) + p('M3 3l3 3M13 3l-3 3M3 13l3-3M13 13l-3-3', R, 1.4), redx: p('M2 2l4 4M14 2l-4 4M8 9l-5 6M8 9l5 6', K, 1.2) + p('M8 2v5M4 9h8', R, 1), crosscyan: p('M1 8h14M8 5v6', K, 1) + p('M4 4l8 8M12 4l-8 8', '#1cc', 1.2), sectioni: r(2, 1, 4, 14, '#fff', K, 1.4) + p('M2 4h4M2 7h4M2 10h4', K) + p('M8 1h7M8 10h7M11.500 1v9', K, 2) + r(9, 11, 6, 4, '#e8d820', K), chamfer: p('M3 15V8L9 2h6', K) + p('M3 1h5M3 2v5', '#888', 1, 'none'), fillet: p('M3 15Q3 2 15 2', K) + p('M3 1h5M3 2v5', '#888', 1), frame: r(2, 2, 12, 12, '#dfe9f0', N, 1.8) + p('M5 4v8h4V8h4', N), wand: p('M2 14L10 6', '#c22', 3) + p('M10 6l2-5M10 6l5-2M10 6l5 2M9 6L7 2', K, 1),
  book: f('M2 3l3-2h9v12l-3 2H2z', '#3e6a88') + r(2.500, 4, 9, 10.500, '#7ba7c2', '#2d5068') + r(4, 6, 6, 2.500, '#234a70', '#cde', .5), grid: p('M3 1v14M8 1v14M13 1v14M1 3h14M1 8h14M1 13h14', '#2d5a78', 1.6), solid: f('M1 1h14v14H1z', '#4a7894') + p('M1 4h14M1 8h14M1 12h14', '#2d5068', 1), hole: r(2, 2, 12, 12, '#5a86a2', N) + r(5, 5, 6, 6, '#fff', N), image: r(2, 2, 12, 12, '#cfdfe8', '#556') + f('M3 13l4-6 3 3 2-2 1 5z', '#456') + o(9, 5, 1, '#e8d860', '#e8d860'),
  letter: t('A', 1, 14, 17, N, 'style="font-family:Liberation Serif"'), poly: p('M1 9l4-4 4 6 6-6', N), arc: p('M2 15Q3 4 14 2', N), circle: o(8, 8, 6) + o(8, 8, .8), rectd: p('M3 3h10v10H3z', K, 1.4) + o(3, 3, 1.500, '#fff', K) + o(13, 3, 1.500, '#fff', K) + o(3, 13, 1.500, '#fff', K) + o(13, 13, 1.500, '#fff', K), tri: p('M2 2v12h12z', N, 1.5, '#4a7088') + f('M8 5h7v5z', '#fff'), wave: p('M0 8q3-6 5 0t5 0 5 0', B), plus21: p('M1 9h6M4 6v6', N) + t('21', 7, 12, 8), ellipse: '<ellipse cx="8" cy="8" rx="7" ry="5" fill="none" stroke="#26425c"/>', spline: p('M3 2h9q-8 4 0 5 2 3-5 4l3 4', K), polybig: p('M1 8l4-6 5 10 5-4', '#3a5a74', 1.4) + p('M4 2h2M5 1v2M0 8h2M1 7v2M9 12h2M10 11v2M14 8h2M15 7v2', K, 1.2),
  m2: r(1.500, 1.500, 13, 13, '#f4f8fa', B) + t('m²', 2, 11, 9), mm2: r(.5, 1.500, 15, 13, '#f4f8fa', B) + t('mm²', 1, 8, 6.500) + p('M2 11h12', N, 2), angle: p('M15 14H2L12 2M7 8q4 2 3 6', B) + t('?', 10, 12, 7), eye: '<ellipse cx="8" cy="6" rx="7" ry="4" fill="#ddd" stroke="#666"/>' + o(8, 6, 2.500, '#555') + p('M1 14.500h14M3 12h10', B), sheet: r(1.500, 1, 13, 14.500, '#c8d4de', '#8aa') + r(4, 3, 9, 10.500, '#fff', N) + f('M1 6l5-6v6z', '#222'), four: r(3, 2, 12, 12, '#fff', N) + p('M9 2v12M3 8h12', N, 2.400), hatchcoord: p('M2 14V2M2 14h13M5 1l10 10M9 1l6 6M5 6l6 6M15 1L5 11', '#8fa8bc', 1) + p('M2 14V3M2 14h12', N),
  xy: axes + t('XY', 4, 12, 8, '#c22'), lz: axes + t('Z', 7, 12, 9, '#c22'), p3: axes + t('3P', 4, 11, 8, '#c22'), lc: axes + o(9, 7, 4, 'none', '#c22') + p('M9 2v10M4 7h10', '#c22', 1), copy: p('M1 1h6l2 2v8H1z', K, 1, '#fff') + p('M6 5h6l3 3v7H6zM8 9h5M8 11h5M8 13h5', N, 1, '#fff'), paste: r(2, 2, 9, 12, '#b5c4ca', '#7d9094') + r(7, 7, 7, 8, '#fff', B) + r(5, 1, 4, 2, '#89a', '#678'), pastey: r(2, 2, 10, 12, '#8d8c28', '#444') + r(8, 7, 6, 7, '#fff', K) + r(5, 1, 4, 2, '#ffe600', '#444'),
  ylw: '<ellipse cx="8" cy="8" rx="5" ry="7" fill="#c8c010" stroke="#555"/>' + r(6, 4, 4, 8, '#eee', '#999'), dome: p('M1 12q0-8 7-8t7 8z', '#888010', 1.500, '#ffe600') + p('M8 4v8M5 5l-1 7M11 5l1 7', K, 1), ycone: f('M8 1l6 10H2z', '#cfc030') + f('M2 11h12v3H2z', '#776') + p('M8 3v8', K), yl: p('M10 1v10H2v4h12V1z', '#998c20', 1, '#c0b850'), dee: f('M2 3h8q5 0 5 5t-5 5H2z', '#2a6fae') + p('M2 13h8', '#dd2', 1.5),
  curve: axes + p('M3 12q4-8 6-4l4 3', '#c22'), curvep: axes + p('M3 12L12 3', '#c22') + t('P', 10, 12, 7), curve2: axes + p('M3 12L12 3', N) + t('2', 9, 12, 8), calcgrid: r(1, 1, 14, 13, '#5a86a2', N) + p('M1 5h14M1 9h14M5 1v13M10 1v13', '#fff', 1) + o(12, 12, 2.500, '#ccc', '#555'), gridred: p('M3 1v14M1 5h14M1 9h9M8 5v10M13 1v5', '#555') + o(11, 11, 3.500, '#e33', '#a00'), gridx: r(1, 2, 14, 12, '#fff', '#777') + p('M8 2v12M1 8h14', '#888', 1), gridgear: p('M2 1v13M6 1v13M10 1v8M0 3h14M0 7h14M0 11h9', '#777', 1) + o(12, 12, 3, '#ddd', '#777'),
  clone: r(1, 3, 7, 9, '#9db7d8', '#7d96b8') + '<rect x="8.500" y="6.500" width="6" height="9" fill="none" stroke="#333" stroke-dasharray="2 1" stroke-width="1"/>' + p('M9 2q4-2 5 3M12 3l2 2 1-3', N, 1.2), zlevel: p('M4 2h10l-3 4H1zM4 10h10l-3 4H1z', R, 1) + p('M8 5v6M6 7l2-2 2 2', N, 1), clonemulti: r(1, 2, 6, 7, '#b8c9de', B) + r(5, 6, 6, 7, '#cddaea', B) + p('M8 2q5-2 6 4', N), clonerow: r(1, 2, 4, 7, '#b8c9de', B) + r(6, 4, 4, 7, '#b8c9de', B) + r(11, 2, 4, 7, '#b8c9de', B) + p('M2 13q6 4 12 0', '#2d6a88', 1.4), ring: [0, 1, 2, 3, 4, 5, 6, 7].map(k => o(8 + 5.500 * Math.cos(k * .785), 8 + 5.500 * Math.sin(k * .785), 1.500, k % 2 ? '#fff' : '#667', '#333')).join(''),
  sel1: r(1, 2, 7, 5, '#c47880', K) + r(8, 10, 7, 5, '#446', K) + p('M5 5l7 7-3 0-1 3z', K, 1, '#fff'), sel2: r(1, 2, 6, 4, '#ccc', '#888') + r(8, 10, 7, 4, '#ccc', '#888') + p('M5 4l7 7-3 0-1 3z', '#888', 1, '#fff'), sel3: r(1, 8, 7, 6, '#b06870', K) + r(6, 2, 8, 4, '#336', K) + p('M14 8v7M12 10l2-2 2 2', N), sel4: r(1, 2, 7, 5, '#c47880', K) + r(6, 10, 8, 4, '#ddd', '#888') + p('M12 2v6M9 5h6', N), sel5: p('M1 4h14M1 8h14M1 12h14M3 2v12M8 2v12', '#b88', 1) + r(4, 4, 8, 5, '#336', K) + p('M10 6l5 7-3 0-2 2z', K, 1, '#fff'), eraser: p('M3 13l9-9', '#d11', 5) + p('M3 13l3-3', '#fff', 4) + p('M2 11l3 3', K),
  tangent: o(10, 11, 4) + p('M1 14L13 1', '#22a', 1.2), redangle: f('M3 13l6-9 3 9z', '#e22') + p('M1 13h14M1 13L10 1', N), redradius: p('M2 4v6q4 6 12 4', N, 1.6) + p('M5 11l8-8M13 6V3h-3', '#e22') + t('R', 10, 11, 7, '#e22'), abcarrow: t('ABC', 4, 7, 6) + p('M1 15l8-6M1 11v4h4', N), level: o(5, 10, 4, '#d8e6ee', '#345', 1) + p('M5 1v14M0 10h16', '#345', 1.2) + f('M5 10V6a4 4 0 0 1 4 4z', '#6c93b0') + t('1.2', 7, 6, 7, '#2f6590'), levelcut: p('M1 7h8L5 13zM6 7h4l2-3h4', '#aab4ba', 1) + t('1.2', 8, 3, 6, '#8fa4b4'),
  hook: p('M6 3q3-3 3 1v9q0 3-3 1', '#333', 1.2), stirrup: p('M3 5v9h11V5l-3-2M3 5l9-3 2 3', '#222', 1.3), lattice: p('M3 2l10 12M13 2L3 14M8 3L3 8l5 5 5-5z', '#40708f', 3) + [[3, 2], [13, 2], [3, 14], [13, 14], [8, 8]].map(c => o(c[0], c[1], 1, '#6d9dbb', '#40708f', 1)).join(''), textii: p('M3 2h4M9 2h4M3 12h4M9 12h4M5 2v10M11 2v10M1 15h14', '#2a2aa0', 1.2), abcopen: t('ABC', 2, 6, 6, '#678') + f('M2 8h5l1 1h6l-2 6H2z', '#a8c4d6'), abe: t('A', 0, 11, 8, K) + r(7, 4, 8, 8, '#333', K) + t('BE', 7.500, 10.500, 5, '#fff'), slope23: p('M2 15L6 3h9l-3 12z', N) + t('23', 6, 8, 6) + o(10, 11, 2.500, '#ddd', '#555'), slope123: p('M1 15L6 2h9l-2 6', K) + t('123', 4, 15, 7, '#22a'),
  winswap: sheetBox + p('M6 14h8l3-4H9zM6 14v10M14 14v8M6 19h8M9 10v8M19 24h8v-6l-4-4-4 4zM6 28L24 9', B, 1.4), winlist: sheetBox + p('M5 14h8l3-4H8zM5 14v10M13 14v8M5 19h8M21 6v22M18 12h10M18 18h10M25 10v5', B, 1.4), windraw: sheetBox + p('M3 9h4l4 5h9l4-5h5M8 25h7v-6l-4-2-3 2zM18 25h7v-6l-4-2-3 2z', B, 1.4), column: r(2, 2, 27, 28, '#857b70', '#333', 2) + r(6.500, 6.500, 18, 19, '#b9b0a4', '#222', 1.500) + o(9, 9, 1, K) + o(22, 9, 1, K) + o(9, 23, 1, K) + pencil, steel: f('M2 2h28v4H19v20h10v4H3v-4h10V6H2z', '#80751a') + f('M3 2h26v2H3zM14 6h4v20h-4zM4 27h24v2H4z', '#d8cf50') + pencil, scaffold: p('M7 3v11M5 2v4h4V2M16 3v11M14 2v4h4V2M25 3v11M23 2v4h4V2M5 28h22M7 14v14M16 14v14M25 14v14M7 28l9-14 9 14M11 28l5-14 4 14', '#222', 1.600) + pencil,
  lshape: '<path d="M2 12V3h5v5h7v3" fill="none" stroke="#26425c" stroke-dasharray="2 1"/>' + p('M1 14h14', N), docs: p('M4 1h9v12q0 2-2 2H3M4 1v12', K, 1.2, '#fff') + p('M6 4h5M6 7h5M6 10h5', K), slab: f('M1 6l10-2 4 2-4 7H1z', '#8aa2b4') + p('M2 15L15 1', K), zd: t('Z', 0, 13, 13, '#e01030') + t('d', 9, 15, 9, '#e01030'), slope: p('M1 8h14M1 11h14', '#5b8cc0', 2) + p('M2 15L15 1', K), frameh: p('M2 5h13M5 5v10', '#666', 3) + o(5, 5, 3, 'none', '#639'), balls: r(1, 3, 5, 9, '#31587c', K) + o(9, 12, 3, '#d02020', '#600') + r(9, 2, 5, 8, '#d8d0b0', '#555'), calcs: r(1, 1, 12, 6, '#fff', K, 1.600) + r(5, 6, 10, 9, '#2a9a9a', '#035') + p('M7 9h6M7 12h6', '#fff'), screen: r(3, 5, 11, 7, '#111', '#555') + p('M10 1h5v4M1 10v5h5', '#f00', 1.4), docblue: r(1, 2, 7, 7, '#fff', '#22a') + r(6, 7, 8, 7, '#fff', '#187a7a', 1.4) + p('M8 10h4M8 12h4', '#187a7a', 1), binoc: f('M2 7l2-5h3v3h2V2h3l2 5v7h-5v-4H7v4H2z', K),
  pin: p('M6 4h5M6.500 4v5M9.500 4v5M4 9.500h9M8 10v3', K, 1.300), stackb: f('M4 4h11l-3 3H1zM4 8h11l-3 3H1z', '#555') + p('M1 7h11l3-3M1 9.500h11l3-3M1 12h11l3-3', K, 1), page: page(), pageb: page(2), plan: r(1.500, 1.500, 10, 13, '#fff', K, 1.400) + p('M4 2v12M9 2v12M4 8h5', K, 2) + p('M14 1v14', '#c22', 1.500), folder,
  fdiy: folder + p('M5 13l3-4h7l-3 4z', '#d11', 1.400) + p('M4 15h9l2-3', '#22c', 1), fan: folder + p('M3 15V3h10v12M3 8h10', '#1414d0', 2), fst: folder + p('M3 9v5M6 9v5M9 9v5M12 9v5', '#c02000', 1) + p('M1 14h14', '#c02000'), fmod: folder + p('M6 2l4 5-4 4 3 3', K, 2) + p('M3 15h9', R, 1.6), fspec: folder + p('M3 12V6M3 12h10M4 11q3-6 5-3t5 2', '#2424c0'), ftime: folder + p('M3 12V4M4 11l2-4 2 4 2-5 2 5', '#2424c0'), fnon: folder + f('M2 3h6V0l5 4-5 4V6H2z', '#f42000') + p('M2 9h12v5H2z', '#622', 1.600), feul: folder + p('M8 2l3 4-3 6M5 14h8', '#141450', 2.4), modal: p('M4 1l4 4-4 5 4 4', '#112', 1.600) + p('M2 15h10', R, 2) + p('M11 11h5M13.500 8.500v5', '#f03048'), plus: p('M11 2.500h5M13.500 0v5', '#f03048'), specr: axes + p('M3 12q2-8 5-7t6 6', '#c01010', 1.4), specb: axes + p('M3 12q2-8 5-7t6 6', '#2020e0'), timeb: axes + p('M3 12l2-6 3 6 3-7 3 6', '#2020e0'), ft: axes + t('f(t)', 3, 11, 8, '#f02040'),
  // parçalar
  brush: f('M8 7l3 1 5 6-2 2-5-5z', '#1a1a7a') + p('M7 7l4 4', '#d22', 1.4), doc: p('M8 8h5l2.500 2.500V16H8zM10 12h4M10 14h4', K, 1, '#fff'), rdoc: p('M8 8h5l2.500 2.500V16H8zM10 12h4M10 14h4', '#f00', 1, '#fff'), cyan: p('M11 1h4.500v5M.5 11v4.500H5', '#20e0f0', 1.2), yel: p('M11 .5h4.500V5M.5 11v4.500H5', '#e8d420', 1.2),
  nodes: p('M3 4h9v8H3z', '#e33', 1.200) + r(2, 3, 3, 3, '#fff', K) + r(10, 3, 3, 3, '#fff', K) + r(2, 10, 3, 3, '#fff', K), slabg: r(1, 3, 13, 9, '#ccc', K) + p('M4 3v9M7 3v9M10 3v9', '#888'), colred: p('M1 1h7M1 14h7', '#e33', 1.4) + r(3, 2, 3, 12, '#aaa', '#555'), beamw: r(1, 2, 14, 6, '#fff', K, 1.400) + p('M3 6q3-3 5-1t5 1', K, 1), lshp: p('M1 1h7v5h7v7H1zM1 4h7M1 7h14M1 10h14', K, 1.3, '#fff'), lgrid: p('M1 1h7v5h7v7H1zM1 4h7M1 7h14M1 10h14M4 1v12M8 6v7M11 6v7', K, 1.2, '#fff'), foot: p('M4 2h11v12M9 2v12M4 8h11M4 2v5', '#888') + f('M1 7h3v5h3v3H0v-3h1z', '#148'), bell: p('M6 2h5v4l4 7H2l4-7z', K, 1.2, '#fff'), foundation: r(1.500, 2.500, 13, 10, '#fff', K, 1.5) + r(5, 5.500, 6, 4, '#fff', K) + p('M2 3l3 3M14 3l-3 3M2 12l3-3M14 12l-3-3', K, 1), cap: p('M1 8q0-5 3-4h8q3-1 3 4M2 8v3M6 8v3M10 8v3M1 8h14', K, 1.4), star: p('M8 2v12M1 8h14', K, 1.8) + o(8, 8, 2, '#fff', K), tower: p('M5 1h3v7l4 4v2H1M5 1v13M8 6l4 6', N, 1.300), boot: p('M8 1h4v12H1V9h7z', '#238', 1.300, '#dde6ee'), cross: p('M1 14l12-12M4 3l9 10M1 9h7', N, 1.4), piles: p('M1 2h14M1 4h14M3 4v10M6 4v10M10 4v10M13 4v10', K, 1.400), dome2: p('M1 11q1-7 7-7t7 7M4 11l2-6M12 11l-2-6M8 4v7', K, 1.400), obj: page(1.3) + r(1, 8, 14, 7, K, K) + t('OBJ', 2, 14, 6, '#cc2'), strips: r(1, 1, 4, 14, '#bcd8b0', '#555') + p('M8 6h4l3 3v6H8z', '#26a', 1.2, '#cfe4f4'),
  checker: f('M1 1h6v6h8v8H1z', K) + [[2, 3], [5, 5], [2, 8], [6, 9], [9, 11], [12, 9], [4, 12], [12, 13]].map(c => f(`M${c[0]} ${c[1]}h2v2h-2z`, '#fff')).join(''), load: p('M9 0v5M7 3l2 2 2-2M1 8h14M3 8v4M13 8v4M1 10h14', K, 1.2) + t('F', 11, 5, 6, '#555'), load2: p('M10 0v5M1 3l3 0v5M1 10h14M3 8v4', '#777', 1.4) + t('F', 11, 5, 6, '#555'), ibig: p('M2 2h12M2 13h12M5 3v10M8 3v10M11 3v10', K, 1.3), funnel: f('M1 4h14v3l-4 3v4H6v-4L1 7z', '#3d6482'), slab2: p('M2 8l10-6 2 2v4L4 14l-2-2z', K, 1.500, '#eee'), portal: p('M2 14V2h12v12h-3V5H5v9z', N, 1.2, '#9cc4e0'), boxes: r(7, 2, 7, 7, '#fff', K) + p('M2 13l1-5h4v5z', '#777'), stairk: p('M2 13h3v-3h3V7h3V3h3', K, 3.2), bluecurve: p('M1 4q7 7 14 0M1 4v8M15 4v8M1 11h14', '#22c') + p('M11 1h4v3M1 12v3h4', '#e22', 1.400), hatchz: f('M1 1h14v14H1z', '#4c7492') + f('M1 1h5v5H1zM6 6h5v5H6zM11 1h4v4h-4zM1 11h5v4H1z', '#c2d4e2') + o(10, 10, 3, 'none', K),
  towers: p('M4 14V5l3-3v12M9 14V4l4 3v7', K, 1.3, '#ccd'), layersw: p('M2 5h10l3-2M2 8h10l3-2M2 11h10l3-2M2 5v6', K, 1.1), mesh: r(2, 2, 12, 12, '#fff', '#555', 2) + p('M4 6h8M4 10h8M6 4v8M10 4v8', K, 2.200), truss: p('M1 3h10M2 3v4M7 3v4M3 13l10-6M6 14l8-3M13 4v8', '#5a3010', 1.400), peak: p('M1 1v13h14', '#666') + p('M2 11q3-12 6-5t6 7', '#2a8a4a', 1.600) + p('M2 12q4-7 7-3t5 4', '#e33', 1), star8: o(8, 8, 6, 'none', K, 1.3) + p('M8 1v14M1 8h14M3 3l10 10M13 3L3 13', K, 1.200), bars: p('M4 1v14M8 1v14M12 1v14', K, 2.200) + p('M1 4h14M1 8h14M1 12h14', '#555'), zig: p('M1 3h14M1 12h14M2 12l3-7 3 7 3-7 3 7', '#444', 1.200), boxy: r(5, 4, 8, 8, '#f8f490', '#c8b820', 1.400) + p('M2 2v11', K), noded: p('M1 2h14M1 11h14', '#5a3010', 1.6) + o(8, 6, 2.500, '#f8e860', '#987') + p('M8 9h5l2 2v4H8z', K, 1, '#fff'), hatchb: r(2, 2, 8, 8, '#999', K, 1.400) + r(7, 6, 8, 8, '#ddd', K, 1.400) + p('M2 8l6-6M8 13l6-6', '#fff'), hammer: p('M8 5h6', K, 4) + p('M13 6v9', K, 3) + r(3, 3, 4, 7, '#fff', K),
  docsred: p('M1 1h5l2 2v6H1z', K, 1.100, '#fff') + p('M4 4h5l2 2v6H4z', '#e22', 1.300, '#fff') + p('M8 8h5l2 2v5H8z', K, 1.100, '#fff'), check: r(1.500, 1.500, 10, 12, '#fff', '#338', 1.300) + p('M3 5l2 2 4-4M3 9h6M3 11h5', '#338'), lshape2: p('M1 2h7v4h4v4H1z', '#22a', 1.300, '#fff'), block: f('M1 5l6-4 7 3v8l-7 3-6-3z', '#666') + p('M1 5l7 3 6-4M8 8v7', K), cone3: f('M1 5l12-4v11L1 10z', '#888') + p('M1 5l12-4v11L1 10z', K), monitor: r(1, 2, 13, 8, '#fff', '#22a', 1.400), pilesb: p('M1 3h14M3 3v12M7 3v9M12 3v6', '#1f4660', 2.600), towerb: p('M5 1h3v7l4 4v2H1M5 1v13', N, 1.300), bootb: p('M8 1h4v12H1V9h7z', N, 1.300), redarr: p('M1 2h7M1 7h7M1 12h5M5 0l3 2-3 2M5 5l3 2-3 2', '#e11', 1.400) + r(9, 1, 5, 6, '#eee', '#888'), redarr2: p('M1 6h7M5 4l3 2-3 2', '#e11', 1.400) + r(9, 1, 5, 7, '#ddd', '#999'), rib: p('M4 1h9v12M1 13V8h3V1M6 1v12M9 1v12', '#444', 1.4), ruler: r(.5, 1.500, 15, 5, '#fff', K) + p('M3 2v3M6 2v3M9 2v3M12 2v3', K, 1), mesh2: f('M1 1h14v14H1z', '#888') + p('M1 6h14M1 11h14M6 1v14M11 1v14', K), gear: o(6, 6, 5, '#888', K) + o(6, 6, 2, '#bbb', K), slab3: p('M1 3h14M1 6h13M1 9h9', '#567', 2), barsred: p('M3 1v14M8 1v14M13 1v7', '#901010', 2.600) + p('M1 4h14M1 9h8', '#456'), barsblue: p('M3 1v14M8 1v14M13 1v7', '#79a8c8', 2.600) + p('M1 4h14M1 9h8', '#456'), gears: o(6, 5, 4, '#5b6f80', '#223', 1.500) + o(11, 11, 3.500, '#3a8a58', '#1d4a30', 1.500),
  // görev çubuğu
  win: f('M1 1h6.700v6.700H1zM8.300 1H15v6.700H8.300zM1 8.300h6.700V15H1zM8.300 8.300H15V15H8.300z', '#3cc4ff'), taskview: r(6, 2, 9, 10, '#f0f0f0', '#f0f0f0', 0) + r(1, 5, 9, 9, '#8a8a8a', '#999', .4), chat: f('M8 1a7 7 0 1 1-3 13.500L1 15l1-3A7 7 0 0 1 8 1z', '#6a5fc8') + r(4, 5.500, 5, 5, '#fff', '#fff', 1) + f('M10 8l3-2v4z', '#fff'), edge: o(8, 8, 7, '#1f7fd0', '#1f7fd0') + f('M1 7c1-9 14-8 14 0 0 3-5 3-5 1 0-3-5-4-9-1z', '#3fd08c') + f('M6 9c0 5 5 5 8 3-3 5-11 2-8-3z', '#0a4a90'), store: r(2, 4.500, 12, 10.500, '#f2f2f2', '#f2f2f2') + p('M5 4V1.500h6V4', '#29a8e8') + f('M5 7h3v3H5z', '#f25022') + f('M8.500 7h3v3h-3z', '#7fba00') + f('M5 10.500h3v3H5z', '#00a4ef') + f('M8.500 10.500h3v3h-3z', '#ffb900'), mail: f('M1 6l7-5 7 5v9H1z', '#1268b8') + f('M3 5h10v4l-5 4-5-4z', '#eee') + f('M1 6l7 6 7-6v9H1z', '#2aa8f0'), phone: r(3, 1, 10, 12, '#1a80c8', '#0d5c98') + f('M5 2h7v11H5z', '#1f9ce8') + f('M1 11h5v3H1z', '#0d5c98'), docapp: f('M1 1h14v10l-4 4H1z', '#f4f4f4') + t('DOCI', 3, 5, 4.500, '#c00') + p('M3 8h10M3 10.500h9M3 13h6', '#888', .7), office: f('M9 1l5 2v10l-5 2-6-3V5z', '#e8401c') + f('M9 4v8l-4-1V6z', '#202020') + f('M3 5l3-2v10l-3-1z', '#b03060'), files: f('M1 3h5l1 1h8v10H1z', '#f8c640') + f('M4 9h8v5H4z', '#1a80d0') + f('M1 2h5l1 2H1z', '#d8981c'),
  spotify: o(8, 8, 7, '#1ed760', '#1ed760') + p('M4 6q4-2 8 .5M4.500 8.500q4-1.500 7 .5M5 11q3-1 5.500 .5', '#111', 1.300), chrome: o(8, 8, 7, '#ea4335', '#ea4335') + f('M8 8L1.500 5A7 7 0 0 0 8 15.500L11 10z', '#34a853') + f('M8 8l3 2-3.500 5.500A7.500 7.500 0 0 0 15 5H8z', '#fbbc05') + o(8, 8, 3, '#4285f4', '#fff', 1), bluei: r(1, 1, 14, 14, '#1040f0', '#fff', 1) + o(8, 4, 2, '#1040f0', '#fff') + p('M5 14V8h6v6M3 2v12M13 2v12', '#fff', .8), redcad: f('M.5 .5h15v15H.500z', '#e81c24') + t('CAD', 2, 14, 6.500, '#fff') + p('M2 8l4-4v4M8 8V4l2 2 2-2v4', '#fff', 1), calc: r(3, 1, 10, 14, '#4c6a84', '#7a93a8', .5) + f('M4 2h8v3H4z', '#5cc8f8') + p('M4.500 8h1.500M7.500 8H9M10.500 8H12M4.500 11h1.500M7.500 11H9M10.500 11H12', '#dfe8f0', 1.600), ideapp: f('M3 2h2.500v2H3z', '#e22') + f('M3 5h2.500v9H3zM7 2h2.500v12H7zM11 2h3v3h-3zM11 6.500h3v3h-3zM11 11h3v3h-3z', '#f2f2f2'), weather: o(11, 5, 4, '#f8a020', '#f8a020') + f('M3 15a3.500 3.500 0 0 1 0-7 4 4 0 0 1 7-1 4 4 0 0 1 3 8z', '#a9c8f4'), chev: p('M3 10l5-5 5 5', '#fff', 1.4), sync: p('M2 7a6 6 0 0 1 11-2M14 1v5h-4M2 14v-4h4', '#ddd', 1.2) + o(11, 12, 3.500, '#0a84e8', '#0a84e8'), wifi: p('M1 6q7-6 14 0M3.500 9q4.500-4 9 0M6 11.500q2-2 4 0', '#fff', 1.300) + o(8, 13.500, .8, '#fff', '#fff'), vol: p('M1 6h3l4-4v12l-4-4H1zM10.500 5q2 3 0 6', '#fff', 1.2) + p('M12.500 3q3 5 0 10', '#777', 1), bat: r(5, 4.500, 9, 8, 'none', '#fff', 1.300) + p('M1 3h5M2 1v5h3V1M15.500 7v3', '#fff', 1.300)
};

function draw(name) {
  const size = /^(winswap|winlist|windraw|column|steel|scaffold)$/.test(name) ? 32 : 16;
  return `<svg viewBox="0 0 ${size} ${size}" aria-hidden="true">${name.split('+').map(n => icons[n] || '').join('')}</svg>`;
}

document.querySelectorAll('[data-i]').forEach(el => { el.innerHTML = draw(el.dataset.i); });

// araç çubukları: | ayırıcı, h ve = tutamak, * basılı düğme
document.querySelectorAll('[data-icons]').forEach(bar => {
  bar.innerHTML = bar.dataset.icons.trim().split(/\s+/).map(n => {
    if (n === '|') return '<span class="sep"></span>';
    if (n === 'h' || n === '=') return '<span class="handle"></span>';
    const on = n.endsWith('*');
    const name = on ? n.slice(0, -1) : n;
    const slim = name === 'v' || name === 'more' || name === '<';
    return `<button class="tb${on ? ' on' : ''}${slim ? ' slim' : ''}">${draw(name)}</button>`;
  }).join('');
});

// 3B model: kat dilimleri, [ustY, altY, sagUst, sagAlt, tur]
const floors = [
  [310, 341, 1550, 1561, 'm'], [341, 396, 1561, 1577, 'm'], [396, 406, 1576, 1575, 'r'],
  [406, 445, 1563, 1571, 'm'], [445, 455, 1570, 1569, 'r'], [455, 489, 1558, 1565, 'm'],
  [489, 498, 1564, 1563, 'r'], [498, 528, 1554, 1559, 'm'], [528, 536, 1558, 1557, 'r'],
  [536, 564, 1551, 1554, 'm'], [564, 571, 1553, 1552, 'g'], [571, 592, 1547, 1547, 'd'],
  [592, 598, 1548, 1548, 'g'], [598, 629, 1548, 1548, 'd']
];
const fill = { m: '#04b840', r: '#f00', g: '#00f850', d: '#0c8c38' };
let svg = '<path d="M1577 383L1576 410 1550 612 1546 600 1546 560 1565 406z" fill="#333"/>';
floors.forEach(([y1, y2, x1, x2, k]) => {
  svg += `<path d="M1380 ${y1}H${x1}L${x2} ${y2}H1380z" fill="${fill[k]}"/>`;
  let d = '';
  const stepX = k === 'd' ? 4 : 6, n = Math.floor((x1 - 1380) / stepX);
  for (let i = 0; i <= n; i++) {
    const a = 1380 + i * stepX, b = 1380 + (x2 - 1380) * i / n;
    d += `M${a} ${y1}Q${a + (i % 5) - 2} ${(y1 + y2) / 2} ${b} ${y2}`;
  }
  if (k === 'm' || k === 'd') for (let y = y1 + 3; y < y2; y += 4) d += `M1380 ${y}Q1450 ${y + 2} ${x1 + (x2 - x1) * (y - y1) / (y2 - y1)} ${y}`;
  else d += `M1380 ${y1}H${x1}M1380 ${y2}H${x2}`;
  svg += `<path d="${d}" fill="none" stroke="#083c18" stroke-width=".8"/>`;
});
let tower = '';
for (let y = 265; y < 350; y += 4) tower += `M${y < 290 ? 1401 : 1411} ${y}H${y < 290 ? 1467 : 1454}`;
for (let x = 1414; x < 1456; x += 6) tower += `M${x} 263V350`;
svg += `<path d="M1402 263H1468L1467 290H1454L1456 352H1411V290H1400z" fill="#0a9a3c"/><path d="${tower}" stroke="#083c18" stroke-width=".9"/>
  <path d="M1468 263V310" stroke="#0f5" stroke-width="3"/><path d="M1468 263H1403L1400 290" fill="none" stroke="#0c4" stroke-width="1"/>
  <path d="M1400 292h10v49h-8zM1454 292h11v49h-11z" fill="#00f850"/><path d="M1400 315h10M1454 315h11" stroke="#083c18"/>
  <path d="M1425 396H1434L1440 564H1432z" fill="#f00"/><path d="M1432 564H1440L1441 622H1435z" fill="#0f5"/><path d="M1540 572h5v20h-6z" fill="#0f5"/>`;
document.getElementById('model').innerHTML = svg;
```
